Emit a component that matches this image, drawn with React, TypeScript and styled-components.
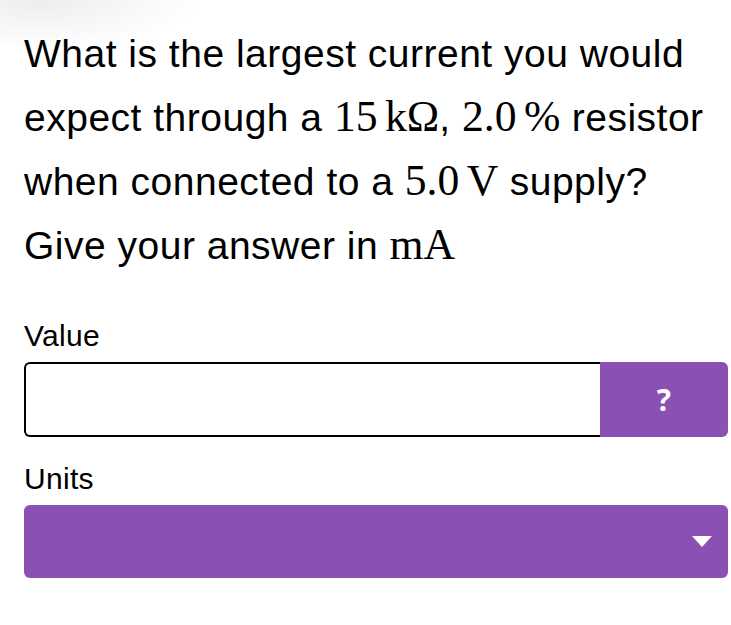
import React from 'react';
import styled, { createGlobalStyle } from 'styled-components';

const GlobalStyle = createGlobalStyle`
  html, body {
    margin: 0;
    padding: 0;
    background: #ffffff;
  }
  body {
    font-family: "Liberation Sans", Arial, Helvetica, sans-serif;
    color: #000000;
    background:
      radial-gradient(ellipse 160px 50px at 40px 0px, rgba(0, 0, 0, 0.07), rgba(0, 0, 0, 0) 100%),
      #ffffff;
    min-height: 625px;
  }
`;

const purple = '#8a50b4';

const Page = styled.div`
  padding: 22px 3px 0 24px;
`;

const Question = styled.p`
  margin: 0;
  font-size: 39px;
  line-height: 64px;
  letter-spacing: 0.5px;
  white-space: nowrap;
`;

const Math = styled.span`
  font-family: "Liberation Serif", "DejaVu Serif", serif;
  font-size: 1.12em;
  line-height: 1;
  letter-spacing: 0;
`;

const Thin = styled.span`
  display: inline-block;
  width: 0.17em;
`;

const Field = styled.div<{ $gap: number }>`
  margin-top: ${(p) => p.$gap}px;
  display: flex;
  flex-direction: column;
`;

const Label = styled.label`
  font-size: 30px;
  line-height: 32px;
  letter-spacing: 0.3px;
  margin-bottom: 10px;
`;

const InputGroup = styled.div`
  display: flex;
  height: 75px;
`;

const Input = styled.input`
  flex: 1;
  min-width: 0;
  box-sizing: border-box;
  border: 2px solid #000000;
  border-right: none;
  border-radius: 6px 0 0 6px;
  font-size: 27px;
  padding: 0 14px;
  outline: none;
  background: #ffffff;
`;

const HelpButton = styled.button`
  width: 128px;
  border: none;
  border-radius: 0 6px 6px 0;
  background: ${purple};
  color: #ffffff;
  font-family: "Open Sans", "Noto Sans", sans-serif;
  font-weight: 700;
  font-size: 30px;
  padding: 0;
  display: flex;
  align-items: center;
  justify-content: center;
`;

const Select = styled.div`
  height: 73px;
  border-radius: 6px;
  background: ${purple};
  display: flex;
  align-items: center;
  justify-content: flex-end;
  padding-right: 16px;
`;

const Caret = styled.span`
  width: 0;
  height: 0;
  border-left: 10px solid transparent;
  border-right: 10px solid transparent;
  border-top: 11px solid #ffffff;
`;

export default function App() {
  return (
    <>
      <GlobalStyle />
      <Page>
        <Question>
          What is the largest current you would
          <br />
          expect through a{' '}
          <Math>
            15<Thin />kΩ
          </Math>
          ,{' '}
          <Math>
            2.0<Thin />%
          </Math>{' '}
          resistor
          <br />
          when connected to a{' '}
          <Math>
            5.0<Thin />V
          </Math>{' '}
          supply?
          <br />
          Give your answer in <Math>mA</Math>
        </Question>
        <Field $gap={42}>
          <Label>Value</Label>
          <InputGroup>
            <Input type="text" />
            <HelpButton>?</HelpButton>
          </InputGroup>
        </Field>
        <Field $gap={26}>
          <Label>Units</Label>
          <Select>
            <Caret />
          </Select>
        </Field>
      </Page>
    </>
  );
}
